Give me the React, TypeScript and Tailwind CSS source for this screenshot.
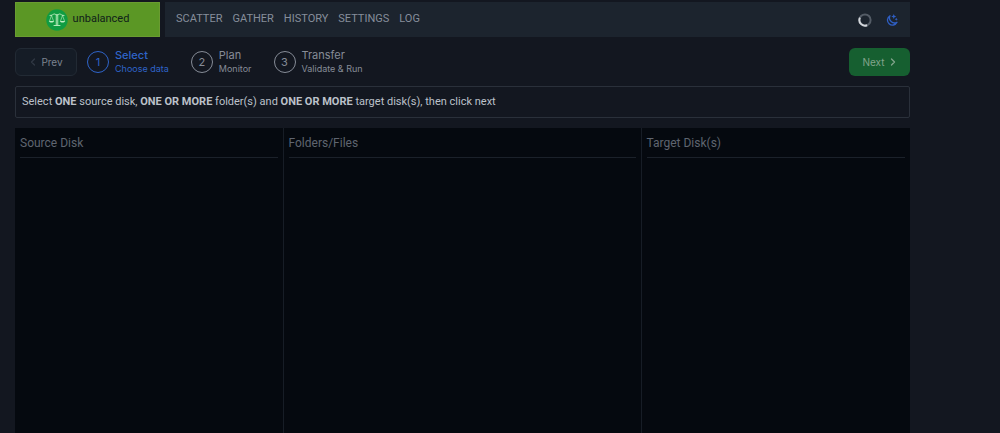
import { clsx } from 'clsx';

interface Step {
  id: number;
  title: string;
  subtitle: string;
}

const NAV_ITEMS = ['Scatter', 'Gather', 'History', 'Settings', 'Log'];

const STEPS: Step[] = [
  { id: 1, title: 'Select', subtitle: 'Choose data' },
  { id: 2, title: 'Plan', subtitle: 'Monitor' },
  { id: 3, title: 'Transfer', subtitle: 'Validate & Run' },
];

const PANES = ['Source Disk', 'Folders/Files', 'Target Disk(s)'];

function Logo() {
  return (
    <svg viewBox="0 0 44 44" className="size-[22px]" aria-hidden="true">
      <circle cx="22" cy="22" r="21.5" fill="#109c42" />
      <g fill="none" stroke="#c3efc4" strokeWidth="1.8" strokeLinecap="round" strokeLinejoin="round">
        <path d="M8 13c5 0 6-3 9-3 2 0 3 2 5 2s3-2 5-2c3 0 4 3 9 3" />
        <path d="M20.500 12v20M23.500 12v20M16 33h12" />
        <path strokeWidth="1.2" d="M11 13L7 24M11 13l4 11M33 13l-4 11M33 13l4 11" />
      </g>
      <path d="M6 24h10c-1 4-9 4-10 0zM28 24h10c-1 4-9 4-10 0z" fill="#c3efc4" />
    </svg>
  );
}

function Spinner() {
  return (
    <svg viewBox="0 0 14 14" className="size-[14px]" fill="none" strokeWidth="2" aria-hidden="true">
      <circle cx="7" cy="7" r="5.6" stroke="#545c66" />
      <path d="M1.9 4.7A5.6 5.6 0 0 0 9.1 12.2" stroke="#d3d7dc" />
    </svg>
  );
}

function MoonStars() {
  return (
    <svg viewBox="0 0 24 24" className="size-3" aria-hidden="true">
      <path
        d="M8 3.500A10 10 0 1 0 22 16.500 10 10 0 0 1 8 3.500z"
        fill="none"
        stroke="#2f5fc4"
        strokeWidth="2.6"
        strokeLinejoin="round"
      />
      <path
        d="M15.500 0l1.500 3.500 3.500 1.500-3.500 1.500-1.500 3.500-1.500-3.500L10.500 5l3.500-1.500zM20.500 7.500l1 2 2 1-2 1-1 2-1-2-2-1 2-1z"
        fill="#2f5fc4"
      />
    </svg>
  );
}

function Chevron({ left = false }: { left?: boolean }) {
  return (
    <svg
      viewBox="0 0 8 8"
      className="size-2"
      fill="none"
      stroke="currentColor"
      strokeWidth="1.3"
      strokeLinecap="round"
      strokeLinejoin="round"
      aria-hidden="true"
    >
      <path d={left ? 'M5.500 1L2.500 4l3 3' : 'M2.500 1l3 3-3 3'} />
    </svg>
  );
}

function Header() {
  return (
    <header className="flex h-[35px] gap-[5px] text-[11px]">
      <a
        href="#home"
        className="flex w-[145px] items-center justify-center gap-[5px] border border-[#6a9c31] bg-[#5b9725] text-[#10201a]"
      >
        <Logo />
        unbalanced
      </a>
      <div className="flex flex-1 items-center justify-between bg-[#1c242e] pr-3 pl-[11px]">
        <nav className="flex gap-[10px] text-[#868e9b] uppercase">
          {NAV_ITEMS.map(item => (
            <a key={item} href={`#${item.toLowerCase()}`}>
              {item}
            </a>
          ))}
        </nav>
        <div className="flex items-center gap-[14px]">
          <Spinner />
          <button type="button" aria-label="Toggle theme">
            <MoonStars />
          </button>
        </div>
      </div>
    </header>
  );
}

function StepItem({ step, active }: { step: Step; active: boolean }) {
  return (
    <li className={clsx('flex items-center gap-[6px]', active ? 'text-[#2f64c8]' : 'text-[#868c97]')}>
      <span className="flex size-[22px] items-center justify-center rounded-full border border-current text-[11px]">
        {step.id}
      </span>
      <span className="flex flex-col">
        <span className={clsx('text-[11px] leading-[14px]', active && 'font-medium')}>{step.title}</span>
        <span className="text-[9px] leading-[14px]">{step.subtitle}</span>
      </span>
    </li>
  );
}

export default function App() {
  return (
    <div className="flex min-h-screen flex-col bg-[#131720] pt-[2px] pr-[90px] pl-[15px] font-['Roboto',sans-serif]">
      <Header />

      <div className="mt-[11px] flex items-center justify-between font-['Inter',sans-serif]">
        <div className="flex items-center gap-[10px]">
          <button
            type="button"
            className="flex h-7 w-[62px] items-center justify-center gap-1 rounded-md border border-[#222a34] bg-[#151c26] text-[10px] text-[#7c838f]"
          >
            <span className="text-[#303844]">
              <Chevron left />
            </span>
            Prev
          </button>
          <ol className="flex gap-[22px]">
            {STEPS.map(step => (
              <StepItem key={step.id} step={step} active={step.id === 1} />
            ))}
          </ol>
        </div>
        <button
          type="button"
          className="flex h-7 w-[61px] items-center justify-center gap-1 rounded-md bg-[#165f30] text-[10px] text-[#82a48c]"
        >
          Next
          <Chevron />
        </button>
      </div>

      <p className="mt-[10px] rounded-xs border border-[#2a303a] px-[6px] py-[6px] text-[11px] leading-[18px] text-[#bcc1ca]">
        Select <b>ONE</b> source disk, <b>ONE OR MORE</b> folder(s) and <b>ONE OR MORE</b> target disk(s), then click
        next
      </p>

      <main className="mt-[10px] grid flex-1 grid-cols-[3fr_4fr_3fr] divide-x divide-[#171d26] bg-[#05090f]">
        {PANES.map(pane => (
          <section key={pane} className="px-[5px]">
            <h2 className="border-b border-[#1b212a] pt-[5px] pb-[4px] text-xs leading-5 text-[#5f6570]">{pane}</h2>
          </section>
        ))}
      </main>
    </div>
  );
}
